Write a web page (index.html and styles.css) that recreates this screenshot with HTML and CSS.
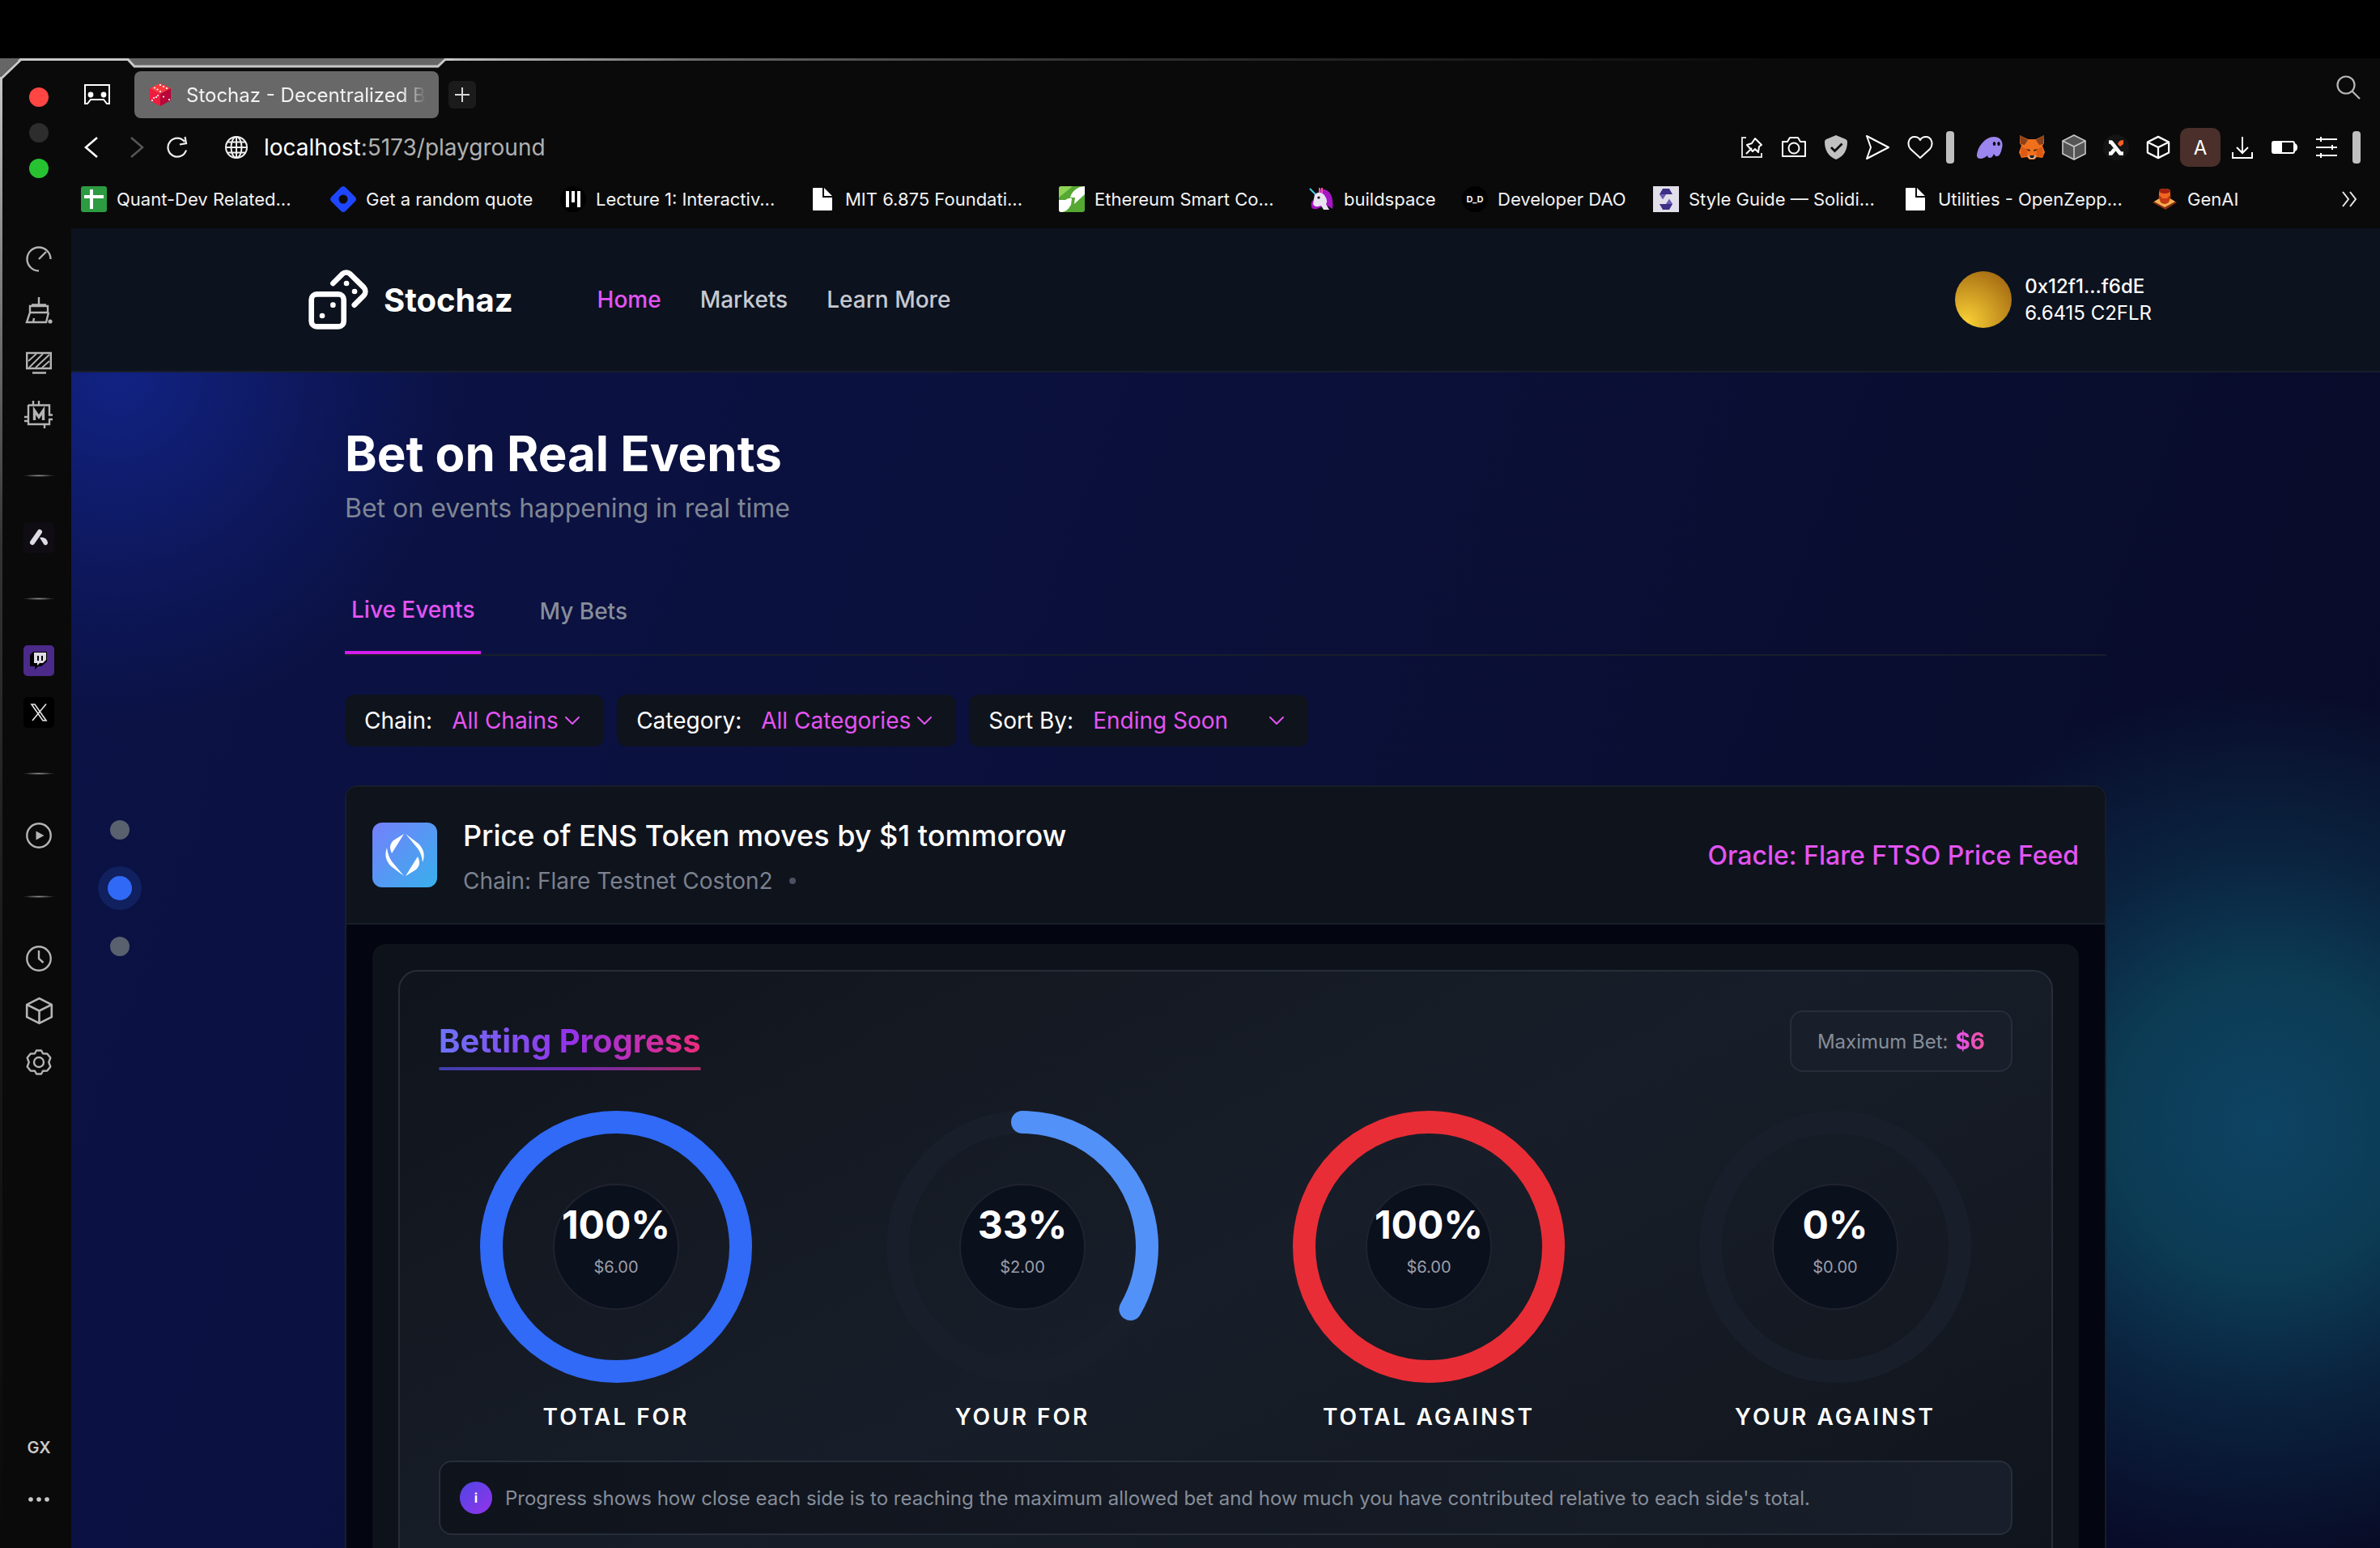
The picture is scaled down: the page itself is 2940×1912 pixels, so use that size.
FILE: index.html
```html
<!DOCTYPE html>
<html lang="en">
<head>
<meta charset="utf-8">
<title>Stochaz - Decentralized Betting</title>
<link rel="stylesheet" href="styles.css">
</head>
<body>
<svg class="defs" width="0" height="0" aria-hidden="true">
  <symbol id="file" viewBox="0 0 32 32"><path fill="#fff" d="M5 2h11v12h12v15a1 1 0 0 1-1 1H5a1 1 0 0 1-1-1V3a1 1 0 0 1 1-1zM18 2l10 10H18z"/></symbol>
  <symbol id="chevron" viewBox="0 0 20 20"><path fill="none" stroke="#e354f3" stroke-width="2" stroke-linecap="round" stroke-linejoin="round" d="M1 6l8 8 8-8"/></symbol>
  <symbol id="cube" viewBox="0 0 32 32"><path fill="none" stroke="currentColor" stroke-width="2.4" stroke-linejoin="round" d="M16 2l14 7v14l-14 7-14-7V9zM2 9l14 7 14-7M16 16v14"/></symbol>
</svg>

<div class="browser">
  <svg class="frame" width="560" height="32" viewBox="0 0 560 32" aria-hidden="true">
    <path fill="#666" d="M0 0h25L0 24zM158 0l9 10h374l9-10z"/>
    <path fill="none" stroke="#c8c8c8" stroke-width="3" d="M1.500 32V25L26 1.500h132l8 8.500h375l9-8.500h10"/>
  </svg>

  <aside class="dock">
    <div class="lights"><i class="light light--red"></i><i class="light light--idle"></i><i class="light light--green"></i></div>
    <nav class="dock__items" aria-label="Sidebar">
      <button class="dock__btn" aria-label="Speed"><svg width="32" height="32" viewBox="0 0 32 32"><path class="line" d="M16 30.500A14.500 14.500 0 1 1 30.500 16M16 16l9-9"/></svg></button>
      <button class="dock__btn" aria-label="Cleaner"><svg width="34" height="34" viewBox="0 0 34 34"><path class="line" d="M17 0v10M6 11h22v8H6zM6 19L2 31h24l3-12M11 26l-1 5M8 9.500h18"/><circle cx="31" cy="30" r="2.600" fill="#b4b4b4"/></svg></button>
      <button class="dock__btn" aria-label="Display"><svg width="32" height="28" viewBox="0 0 32 28"><path class="line" d="M1.200 2h29.600v19H1.200zM8 26.500h17"/><path stroke="#b4b4b4" stroke-width="1.800" d="M3 12L13 3M4 20L21 3M12 20L29 4M20 20l9-8"/></svg></button>
      <button class="dock__btn" aria-label="Mods"><svg width="36" height="36" viewBox="0 -1 36 36"><path class="line" d="M11 0v5M18 0v5M5 5.500h26v12h4M31 23v6H5V5M35 23h-5M0 20h5M0 25h5M25 29v5"/><path class="line line--bold" d="M12.500 24V12l5.500 8 5.500-8v12"/></svg></button>
      <i class="dock__sep"></i>
      <button class="dock__btn" aria-label="Aria"><svg width="38" height="38" viewBox="0 0 38 38"><rect width="38" height="38" rx="5" fill="#0f0d13"/><path stroke="#dddbe3" stroke-width="6" stroke-linecap="round" d="M20 12l-9 13"/><path fill="#dddbe3" d="M20 19c5-1 9 1 10 6 0 4-4 4-5 2z"/></svg></button>
      <i class="dock__sep"></i>
      <button class="dock__btn" aria-label="Twitch"><svg width="38" height="38" viewBox="0 0 38 38"><rect width="38" height="38" rx="5" fill="#4b2a8a"/><path fill="#000" d="M8 12l4-4h17v12l-7 6h-4l-4 4v-4H8z"/><path fill="#dedbe6" d="M13 9h15v9l-4 4h-4l-3 3v-3h-4z"/><path fill="#000" d="M17 13h2v6h-2zM22 13h2v6h-2z"/></svg></button>
      <button class="dock__btn" aria-label="X"><svg width="38" height="38" viewBox="0 0 38 38"><rect width="38" height="38" rx="5" fill="#000"/><path fill="none" stroke="#e4e4e4" stroke-width="1.600" d="M10 9h4l14 20h-4zM28 8.500L11 29"/></svg></button>
      <i class="dock__sep"></i>
      <button class="dock__btn" aria-label="Player"><svg width="32" height="32" viewBox="0 0 32 32"><circle class="line" cx="16" cy="16" r="14.700"/><path fill="#b4b4b4" d="M12.500 10.500l10 5.500-10 5.500z"/></svg></button>
      <i class="dock__sep"></i>
      <button class="dock__btn" aria-label="History"><svg width="32" height="32" viewBox="0 0 32 32"><circle class="line" cx="16" cy="16" r="14.700"/><path class="line" d="M16 6v10l5.500 5"/></svg></button>
      <button class="dock__btn" aria-label="Extensions"><svg width="35" height="35"><use href="#cube"/></svg></button>
      <button class="dock__btn" aria-label="Settings"><svg width="32" height="32" viewBox="0 0 32 32"><path class="line" stroke-linejoin="round" d="M13 1.500h6l2 3.800 5.300.2 4 5-2 5.500 2 5.500-4 5-5.300.2-2 3.800h-6l-2-3.800-5.300-.2-4-5 2-5.500-2-5.500 4-5 5.300-.2z"/><circle class="line" cx="16" cy="16" r="6"/></svg></button>
    </nav>
    <div class="dock__foot">
      <button class="dock__btn dock__btn--gx">GX</button>
      <button class="dock__btn" aria-label="More"><svg width="28" height="8" viewBox="0 0 28 8" fill="#c8c8c8"><circle cx="4" cy="4" r="2.800"/><circle cx="14" cy="4" r="2.800"/><circle cx="24" cy="4" r="2.800"/></svg></button>
    </div>
  </aside>

  <div class="window">
    <div class="tabs">
      <button class="icon-btn tabs__island" aria-label="Corner"><svg width="32" height="26" viewBox="0 0 32 26"><path fill="none" stroke="#fff" stroke-width="2" d="M1 1h30v23h-3l-4-5H8l-4 5H1z"/><circle cx="8" cy="13" r="3.400" fill="#fff"/><circle cx="24" cy="13" r="3.400" fill="#fff"/></svg></button>
      <div class="tab">
        <svg width="28" height="30" viewBox="0 0 28 30"><path fill="#fb3a40" d="M14 1L27 7l-13 7L1 7z"/><path fill="#ee1d3f" d="M1 7l13 7v15L3 23a3 3 0 0 1-2-3z"/><path fill="#b8053a" d="M27 7l-13 7v15l11-6a3 3 0 0 0 2-3z"/><g fill="#fff"><circle cx="14" cy="3" r="1.100"/><circle cx="18" cy="5" r="1.100"/><circle cx="22" cy="7" r="1.100"/><circle cx="7" cy="6.500" r="1.100"/><circle cx="10.500" cy="8.500" r="1.100"/><circle cx="14" cy="11" r="1.100"/><circle cx="4" cy="22" r="1.100"/><circle cx="6" cy="19" r="1.100"/><circle cx="9" cy="18" r="1.100"/><circle cx="11" cy="16" r="1.100"/><circle cx="18" cy="17.500" r="1.100"/><circle cx="25" cy="21" r="1.100"/></g></svg>
        <span class="tab__title">Stochaz - Decentralized B</span>
      </div>
      <button class="icon-btn tabs__new" aria-label="New tab"><svg width="20" height="20" viewBox="0 0 20 20"><path stroke="#d8d8d8" stroke-width="2" d="M10 1v18M1 10h18"/></svg></button>
      <button class="icon-btn tabs__search" aria-label="Search tabs"><svg width="30" height="30" viewBox="0 0 30 30"><g fill="none" stroke="#b8b8b8" stroke-width="2.200"><circle cx="12" cy="12" r="10.500"/><path d="M19.500 19.500L29 29"/></g></svg></button>
    </div>

    <div class="nav">
      <div class="nav__history">
        <button class="icon-btn" aria-label="Back"><svg width="20" height="28" viewBox="0 0 20 28"><path fill="none" stroke="#fff" stroke-width="2.600" d="M18 2L4 14l14 12"/></svg></button>
        <button class="icon-btn nav__forward" aria-label="Forward"><svg width="20" height="28" viewBox="0 0 20 28"><path fill="none" stroke="#555" stroke-width="2.600" d="M2 2l14 12L2 26"/></svg></button>
        <button class="icon-btn nav__reload" aria-label="Reload"><svg width="26" height="28" viewBox="0 0 26 28"><path fill="none" stroke="#eee" stroke-width="2.200" d="M24 17.500A11.500 11.500 0 1 1 22 7M22.500 1l1.500 8-8 1.500"/></svg></button>
      </div>
      <div class="address">
        <svg width="28" height="28" viewBox="0 0 28 28"><g fill="none" stroke="#eee" stroke-width="2"><circle cx="14" cy="14" r="13"/><ellipse cx="14" cy="14" rx="6.500" ry="13"/><path d="M3 7.500h22M1 14h26M3 20.500h22M14 1v26"/></g></svg>
        <span class="address__text">localhost<span class="address__rest">:5173/playground</span></span>
      </div>
      <div class="tools">
        <button class="icon-btn" aria-label="Pin"><svg width="28" height="28" viewBox="0 0 28 28"><path fill="none" stroke="#d8d8d8" stroke-width="2" d="M7 2H2v24h24v-5"/><path fill="none" stroke="#fff" stroke-width="2" stroke-linejoin="round" d="M18 3l8 8-3 2-1 7-4-4-3 3-7-8 6-2zM14 15l-7 7"/></svg></button>
        <button class="icon-btn" aria-label="Snapshot"><svg width="32" height="28" viewBox="0 0 32 28"><path fill="none" stroke="#fff" stroke-width="2" stroke-linejoin="round" d="M2 7h6l3-5h10l3 5h6v18H2z"/><circle cx="16" cy="15" r="6.500" fill="none" stroke="#fff" stroke-width="2"/></svg></button>
        <button class="icon-btn" aria-label="Shield"><svg width="30" height="32" viewBox="0 0 30 32"><path fill="#c0c0c0" d="M15 1l12 5q2 1 2 3c0 10-4 18-14 22C5 27 1 19 1 9q0-2 2-3z"/><path fill="none" stroke="#0a0a0a" stroke-width="2.800" d="M9 16l4.500 4.500 9-9"/></svg></button>
        <button class="icon-btn" aria-label="Send"><svg width="30" height="30" viewBox="0 0 30 30"><path fill="none" stroke="#fff" stroke-width="2" stroke-linejoin="round" d="M1 1l27 14L1 29l5-14z"/></svg></button>
        <button class="icon-btn" aria-label="Favorite"><svg width="32" height="30" viewBox="0 0 32 30"><path fill="none" stroke="#fff" stroke-width="2" stroke-linejoin="round" d="M16 28L4 17C-1 11 2 2 9 2q5 0 7 4 2-4 7-4c7 0 10 9 5 15z"/></svg></button>
      </div>
      <i class="grip"></i>
      <div class="tools tools--ext">
        <button class="icon-btn" aria-label="Phantom"><svg width="32" height="28" viewBox="0 0 32 28"><path fill="#9a86ee" d="M0 25C0 14 10 1 21 1c9 0 12 7 10 14-1 5-3 10-6 10-3 0-3-2-4-3-1 2-2 5-5 5-2 0-3-2-3-3-3 4-12 6-13 1z"/><ellipse cx="21.500" cy="9.500" rx="1.700" ry="2.500"/><ellipse cx="27" cy="9.500" rx="1.700" ry="2.500"/></svg></button>
        <button class="icon-btn" aria-label="MetaMask"><svg width="32" height="30" viewBox="0 0 32 30"><path fill="#f0701c" d="M1 0l10 5h10l10-5v10l-2 3 3 8-3 7-7-1-3 3h-6l-3-3-7 1-3-7 3-8-2-3z"/><path fill="#8a421c" d="M1 0l10 6-4 6-5-1zM31 0L21 6l4 6 5-1z"/><path fill="#dd5a14" d="M3 14l8 4-1 8-8 1zM29 14l-8 4 1 8 8 1z"/><path fill="#cfc3b8" d="M11 25h10l-2 4h-6z"/><path fill="#20201f" d="M13 25h6l-1 3h-4zM9 17l5 1-1 2zM23 17l-5 1 1 2z"/></svg></button>
        <button class="icon-btn" aria-label="Wallet"><svg width="30" height="32" viewBox="0 0 30 32"><path fill="#555" d="M15 1l14 7v16l-14 7-14-7V8z"/><path fill="none" stroke="#c8c8c8" stroke-width="1.600" d="M15 1l14 7v16l-14 7-14-7V8zM1 8l14 7 14-7M15 15v16"/></svg></button>
        <button class="icon-btn" aria-label="Explorer"><svg width="32" height="32" viewBox="0 0 32 32"><circle cx="16" cy="16" r="16" fill="#141414"/><path fill="none" stroke="#fff" stroke-width="4.600" stroke-linejoin="round" d="M7 9.500h3l11 14h4M7 23.500h3l4-5"/><path fill="#f2602a" d="M18 12q1-5 7-5v5l-4 3z"/></svg></button>
        <button class="icon-btn" aria-label="Extensions"><svg class="white" width="30" height="30"><use href="#cube"/></svg></button>
        <button class="icon-btn profile">A</button>
        <button class="icon-btn" aria-label="Downloads"><svg width="28" height="28" viewBox="0 0 28 28"><path fill="none" stroke="#fff" stroke-width="2" d="M14 1v20M7 14l7 7 7-7M2 20v7h24v-7"/></svg></button>
        <button class="icon-btn" aria-label="Battery"><svg width="32" height="18" viewBox="0 0 32 18"><rect x="1" y="2" width="27" height="14" rx="2" fill="none" stroke="#fff" stroke-width="2"/><path fill="#fff" d="M2 2h11v14H2zM29 4q3 1 3 5t-3 5z"/></svg></button>
        <button class="icon-btn" aria-label="Easy setup"><svg width="26" height="26" viewBox="0 0 26 26"><path stroke="#fff" stroke-width="2" d="M0 3h26M0 13h26M0 23h26M6 0v6M20 10v6M6 20v6"/></svg></button>
      </div>
      <i class="grip"></i>
    </div>

    <div class="bookmarks">
      <a class="bookmark" href="#"><svg width="32" height="32" viewBox="0 0 32 32"><rect width="32" height="32" rx="3" fill="#2c9b41"/><path fill="#fff" d="M11 4h4v7h13v4H15v13h-4V15H4v-4h7z"/></svg><span>Quant-Dev Related...</span></a>
      <a class="bookmark" href="#"><svg width="32" height="32" viewBox="0 0 32 32"><path fill="#1f46ff" fill-rule="evenodd" d="M13 1.500q3-3 6 0L30.500 13q3 3 0 6L19 30.500q-3 3-6 0L1.500 19q-3-3 0-6zM16 10.500a5.500 5.500 0 1 0 0 11 5.500 5.500 0 0 0 0-11z"/></svg><span>Get a random quote</span></a>
      <a class="bookmark" href="#"><svg width="32" height="32" viewBox="0 0 32 32"><circle cx="16" cy="16" r="16"/><path fill="#fff" d="M7 6h4v20H7zM14 6h4v14h-4zM21 6h4v20h-4z"/></svg><span>Lecture 1: Interactiv...</span></a>
      <a class="bookmark" href="#"><svg width="32" height="32"><use href="#file"/></svg><span>MIT 6.875 Foundati...</span></a>
      <a class="bookmark" href="#"><svg width="32" height="32" viewBox="0 0 32 32"><rect width="32" height="32" rx="3" fill="#55a832"/><path fill="#8ed455" d="M0 3q0-3 3-3h14L0 14z"/><path fill="#fff" d="M32 0v10L19 22l1-8h-6q2-9 12-13zM0 17h8q4-3 8-2l-1 8Q10 32 3 32q-3 0-3-3z"/></svg><span>Ethereum Smart Co...</span></a>
      <a class="bookmark" href="#"><svg width="32" height="32" viewBox="0 0 32 32"><path fill="#a516c4" d="M15 4c12-2 17 10 15 24l-8-5-11 5q-9 2-7-8z"/><path fill="#e9e4f2" d="M8 10q7-5 12 1 5 7 2 11l4 7h-7l-3-5q-8 3-10-2z"/><path stroke="#f05a9c" stroke-width="2" d="M14 2v6M17 2v6"/><path stroke="#46d3e8" stroke-width="2" d="M2 3l7 7"/><circle cx="13" cy="14" r="1.600"/></svg><span>buildspace</span></a>
      <a class="bookmark" href="#"><span class="dao">D_D</span><span>Developer DAO</span></a>
      <a class="bookmark" href="#"><svg width="32" height="32" viewBox="0 0 32 32"><path fill="#e3dfea" d="M0 0h32v32H0z"/><path fill="#3c2f87" d="M12 3h8l4 7h-8l-4 6-4-6zM20 29h-8l-4-7h8l4-6 4 6z"/><path fill="#6d5fb4" d="M8 10h8l-4 6zM24 22h-8l4-6z"/></svg><span>Style Guide — Solidi...</span></a>
      <a class="bookmark" href="#"><svg width="32" height="32"><use href="#file"/></svg><span>Utilities - OpenZepp...</span></a>
      <a class="bookmark" href="#"><svg width="32" height="32" viewBox="0 0 32 32"><path fill="#8a2c14" d="M1 20l15-9 15 9-14 9z"/><path fill="#f4b052" d="M3 19l13-8 13 8-13 7z"/><path fill="#c43812" d="M8 12q8 6 16 0l-3 8q-5 4-10 0z"/><path fill="#f2641f" d="M9 6q0-3 7-3t7 3v6q-7 6-14 0z"/><ellipse cx="16" cy="6" rx="7" ry="3" fill="#a3220e"/></svg><span>GenAI</span></a>
      <button class="icon-btn bookmarks__more" aria-label="More bookmarks"><svg width="20" height="20" viewBox="0 0 20 20"><path fill="none" stroke="#e8e8e8" stroke-width="2" d="M2 1l7 9-7 9M11 1l7 9-7 9"/></svg></button>
    </div>

    <div class="page">
      <header class="site-header">
        <a class="brand" href="#"><svg width="80" height="80" viewBox="0 0 24 24" fill="none" stroke="#fff" stroke-width="2" stroke-linecap="round" stroke-linejoin="round"><rect width="12" height="12" x="2" y="10" rx="2"/><path d="m17.920 14 3.500-3.500a2.240 2.240 0 0 0 0-3l-5-4.920a2.240 2.240 0 0 0-3 0L10 6M6 18h.01M10 14h.01M15 6h.01M18 9h.01"/></svg>Stochaz</a>
        <nav class="menu"><a class="menu__link menu__link--on" href="#">Home</a><a class="menu__link" href="#">Markets</a><a class="menu__link" href="#">Learn More</a></nav>
        <div class="wallet"><i class="wallet__avatar"></i><div><div class="wallet__address">0x12f1...f6dE</div><div class="wallet__balance">6.6415 C2FLR</div></div></div>
      </header>

      <main class="stage">
        <nav class="dots" aria-label="Sections"><a class="dot" href="#" aria-label="Top"></a><a class="dot dot--on" href="#" aria-label="Events"></a><a class="dot" href="#" aria-label="More"></a></nav>
        <div class="content">
          <h1 class="title">Bet on Real Events</h1>
          <p class="subtitle">Bet on events happening in real time</p>
          <div class="views"><button class="view view--on">Live Events</button><button class="view">My Bets</button></div>
          <div class="filters">
            <label class="filter">Chain:<span class="filter__pick"><select class="filter__select"><option>All Chains</option></select><svg width="20" height="20"><use href="#chevron"/></svg></span></label>
            <label class="filter">Category:<span class="filter__pick"><select class="filter__select"><option>All Categories</option></select><svg width="20" height="20"><use href="#chevron"/></svg></span></label>
            <label class="filter">Sort By:<span class="filter__pick"><select class="filter__select filter__select--sort"><option>Ending Soon</option></select><svg width="20" height="20"><use href="#chevron"/></svg></span></label>
          </div>

          <article class="event">
            <header class="event__head">
              <svg width="80" height="80" viewBox="0 0 80 80"><defs><linearGradient id="ens" x1="0" y1="0" x2="1" y2="1"><stop offset="0" stop-color="#7480fb"/><stop offset="1" stop-color="#38b0ec"/></linearGradient></defs><rect width="80" height="80" rx="12" fill="url(#ens)"/><path fill="#fff" d="M39 14L24 38q-5-9 2-16zM18 31q1 10 6 17l15 18-16-12q-10-10-5-23zM41 14l16 12q10 10 5 23-1-10-6-17zM41 66l15-24q5 9-2 16z"/></svg>
              <div class="event__text">
                <h2 class="event__title">Price of ENS Token moves by $1 tommorow</h2>
                <p class="event__chain">Chain: Flare Testnet Coston2<i class="event__bullet"></i></p>
              </div>
              <p class="event__oracle">Oracle: Flare FTSO Price Feed</p>
            </header>
            <div class="panel">
              <section class="progress">
                <div class="progress__head">
                  <h3 class="progress__title">Betting Progress</h3>
                  <div class="limit">Maximum Bet: <b class="limit__value">$6</b></div>
                </div>
                <div class="rings">
                  <div class="ring"><div class="ring__dial"><svg width="336" height="336" viewBox="0 0 336 336"><circle class="ring__arc ring__arc--for" cx="168" cy="168" r="154"/></svg><div class="ring__core"><b class="ring__pct">100%</b><span class="ring__sum">$6.00</span></div></div><div class="ring__label">Total For</div></div>
                  <div class="ring"><div class="ring__dial"><svg width="336" height="336" viewBox="0 0 336 336"><circle class="ring__arc" cx="168" cy="168" r="154"/><circle class="ring__arc ring__arc--mine" cx="168" cy="168" r="154" pathLength="300" stroke-dasharray="100 300" transform="rotate(-90 168 168)"/></svg><div class="ring__core"><b class="ring__pct">33%</b><span class="ring__sum">$2.00</span></div></div><div class="ring__label">Your For</div></div>
                  <div class="ring"><div class="ring__dial"><svg width="336" height="336" viewBox="0 0 336 336"><circle class="ring__arc ring__arc--against" cx="168" cy="168" r="154"/></svg><div class="ring__core"><b class="ring__pct">100%</b><span class="ring__sum">$6.00</span></div></div><div class="ring__label">Total Against</div></div>
                  <div class="ring"><div class="ring__dial"><svg width="336" height="336" viewBox="0 0 336 336"><circle class="ring__arc" cx="168" cy="168" r="154"/></svg><div class="ring__core"><b class="ring__pct">0%</b><span class="ring__sum">$0.00</span></div></div><div class="ring__label">Your Against</div></div>
                </div>
                <div class="note"><i class="note__icon">i</i>Progress shows how close each side is to reaching the maximum allowed bet and how much you have contributed relative to each side's total.</div>
              </section>
            </div>
          </article>
        </div>
      </main>
    </div>
  </div>
</div>
</body>
</html>
```
FILE: styles.css
```css
* { box-sizing: border-box; }
body { margin: 0; background: #000; color: #fff; font-family: Inter, "Liberation Sans", sans-serif; height: 100vh; overflow: hidden; padding-top: 72px; }
h1, h2, h3, p { margin: 0; }
a { color: inherit; text-decoration: none; }
button { border: 0; padding: 0; background: none; color: inherit; font: inherit; }
svg { display: block; flex: none; }
i { font-style: normal; }
.defs { position: absolute; }

.browser { position: relative; display: flex; height: 100%; background: #0a0a0a; border-top: 3px solid; border-image: linear-gradient(to right, #c8c8c8 18%, #666 30%, #333 45%, #0a0a0a 75%) 3; }
.browser::after { content: ""; position: absolute; left: 0; top: 20px; bottom: 0; width: 3px; background: linear-gradient(#c8c8c8, #888 12%, #333 32%, #1a1a1a 60%, #0a0a0a); }
.frame { position: absolute; left: 0; top: -3px; }

/* side dock */
.dock { flex: none; width: 88px; padding: 33px 0 28px 8px; display: flex; flex-direction: column; align-items: center; color: #b4b4b4; }
.lights { display: grid; gap: 20px; }
.light { width: 24px; height: 24px; border-radius: 50%; }
.light--red { background: #ff4643; }
.light--idle { background: #2d2d2d; }
.light--green { background: #27c232; }
.dock__items { margin-top: 68px; display: flex; flex-direction: column; align-items: center; }
.dock__btn { width: 64px; height: 64px; display: grid; place-items: center; }
.dock__btn--gx { font-size: 20px; font-weight: 600; color: #c8c8c8; }
.dock__sep { width: 40px; height: 3px; margin: 42px 0 43px; background: radial-gradient(closest-side, #909090, transparent); }
.dock__foot { margin-top: auto; }
.line { fill: none; stroke: #b4b4b4; stroke-width: 2.4; }
.line--bold { stroke-width: 3.4; }

/* browser chrome */
.window { flex: 1; min-width: 0; display: flex; flex-direction: column; }
.icon-btn { display: grid; place-items: center; }
.tabs { display: flex; align-items: center; height: 71px; padding: 13px 24px 0 16px; }
.tabs__island { margin-right: 30px; }
.tab { width: 376px; height: 58px; padding: 0 18px; border-radius: 8px; background: #686868; display: flex; align-items: center; gap: 18px; color: #f2f2f2; }
.tab__title { white-space: nowrap; font-size: 24px; -webkit-mask-image: linear-gradient(to right, #000 90%, transparent); mask-image: linear-gradient(to right, #000 90%, transparent); }
.tabs__new { width: 34px; height: 34px; margin-left: 12px; border-radius: 6px; background: #1b1b1b; }
.tabs__search { margin: 0 0 18px auto; }
.nav { display: flex; align-items: center; height: 72px; padding: 0 24px 0 14px; }
.nav__history { display: flex; }
.nav__forward { margin-left: 38px; }
.nav__reload { margin-left: 26px; }
.address { display: flex; align-items: center; gap: 20px; margin-left: 46px; font-size: 28px; }
.address__rest { color: #b0b0b0; }
.tools { margin-left: auto; display: grid; grid-auto-flow: column; grid-auto-columns: 52px; align-items: center; }
.tools--ext { margin-left: 18px; margin-right: 6px; }
.grip { width: 10px; height: 40px; border-radius: 4px; background: #c0c0c0; margin-left: 6px; }
.grip:last-child { margin-left: 0; }
.profile { width: 50px; height: 48px; justify-self: center; border-radius: 10px; background: #4a2f2b; font-size: 24px; }
.white { color: #fff; }
.bookmarks { height: 64px; padding: 0 28px 8px 12px; display: grid; grid-template-columns: 308px 284px 308px 308px 308px 190px 236px 308px 308px 1fr auto; align-items: center; font-size: 22px; color: #f2f2f2; white-space: nowrap; }
.bookmark { display: flex; align-items: center; gap: 12px; }
.dao { width: 32px; height: 32px; border-radius: 50%; background: #000; display: grid; place-items: center; font-size: 11px; font-weight: 700; }

/* site */
.page { flex: 1; min-height: 0; display: flex; flex-direction: column; overflow: hidden; }
.site-header { flex: none; display: flex; align-items: center; height: 178px; padding: 0 282px 0 290px; background: #0c121e; border-bottom: 2px solid #171e2b; }
.brand { display: flex; align-items: center; gap: 16px; font-size: 40px; font-weight: 700; }
.menu { display: flex; gap: 48px; margin-left: 104px; }
.menu__link { font-size: 28px; font-weight: 500; color: #c5c9d1; }
.menu__link--on { color: #e354f3; }
.wallet { margin-left: auto; display: flex; align-items: center; gap: 16px; font-size: 24px; line-height: 33px; }
.wallet__address { font-weight: 500; }
.wallet__avatar { width: 70px; height: 70px; border-radius: 50%; background: radial-gradient(circle at 20% 90%, #f8d035, #9c5f0e 95%); }

.stage { flex: 1; min-height: 0; position: relative; background:
  radial-gradient(circle 430px at 2% 0, rgba(18, 36, 138, .9), rgba(18, 36, 138, .35) 55%, transparent),
  radial-gradient(circle 540px at 95% 930px, #0d4363, #0c3b54 35%, rgba(11, 45, 72, .7) 62%, transparent),
  linear-gradient(110deg, #0b1246, #0b103a 45%, #090d2e 75%, #080b26); }
.dots { position: absolute; left: 33px; top: 553px; display: grid; gap: 48px; justify-items: center; }
.dot { width: 24px; height: 24px; margin: 0 15px; border-radius: 50%; background: #59606e; }
.dot--on { width: 30px; height: 30px; margin: -3px 0; background: #3069f6; box-shadow: 0 0 0 12px #11205f; }
.content { max-width: 2176px; margin: 0 auto; padding-top: 64px; }
.title { font-size: 60px; line-height: 72px; font-weight: 700; }
.subtitle { margin-top: 8px; font-size: 32px; line-height: 48px; color: #7f8694; }
.views { display: flex; gap: 64px; margin-top: 48px; border-bottom: 2px solid #171e29; }
.view { padding: 32px 8px 30px; font-size: 28px; line-height: 42px; font-weight: 500; color: #868d99; }
.view--on { color: #e354f3; border-bottom: 4px solid #d31cee; }
.filters { display: flex; gap: 16px; margin-top: 48px; }
.filter { height: 64px; padding: 0 28px 0 24px; display: flex; align-items: center; gap: 24px; border-radius: 12px; background: #0f131c; font-size: 28px; }
.filter__pick { display: flex; align-items: center; gap: 8px; }
.filter__select { appearance: none; border: 0; padding: 0; background: none; color: #e354f3; font: inherit; }
.filter__select--sort { width: 210px; }

.event { margin-top: 48px; border: 2px solid #171e29; border-radius: 16px; background: #030510; overflow: hidden; }
.event__head { display: flex; align-items: center; padding: 32px; background: #0f131c; border-bottom: 2px solid #171e29; }
.event__text { margin-left: 32px; }
.event__title { font-size: 36px; line-height: 56px; font-weight: 500; }
.event__chain { display: flex; align-items: center; margin-top: 8px; font-size: 28px; line-height: 40px; color: #7a818e; }
.event__bullet { width: 8px; height: 8px; margin-left: 20px; border-radius: 50%; background: #4a5261; }
.event__oracle { margin-left: auto; font-size: 32px; font-weight: 500; color: #e354f3; }
.panel { margin: 24px 32px; padding: 32px; border-radius: 16px; background: #0e121b; }
.progress { padding: 48px; border: 2px solid #272d39; border-radius: 24px; background: linear-gradient(153deg, #10141c, #181e29 50%, #10141c); }
.progress__head { display: flex; align-items: center; justify-content: space-between; }
.progress__title { position: relative; font-size: 40px; line-height: 56px; font-weight: 700; color: transparent; background: linear-gradient(to right, #6d74f8, #9333ea 50%, #ee2b7b); -webkit-background-clip: text; background-clip: text; }
.progress__title::after { content: ""; position: absolute; left: 0; right: 0; bottom: -8px; height: 4px; border-radius: 2px; background: linear-gradient(to right, #3f40ad, #6d2bb0 50%, #a32a60); }
.limit { display: flex; align-items: center; gap: 9px; height: 76px; padding: 0 32px; border: 2px solid #272d39; border-radius: 16px; background: #191f2a; font-size: 24px; color: #868d99; }
.limit__value { font-size: 28px; color: transparent; background: linear-gradient(to right, #e354f3, #ee529c); -webkit-background-clip: text; background-clip: text; }
.rings { display: grid; grid-template-columns: repeat(4, 1fr); gap: 64px; margin-top: 48px; }
.ring { display: flex; flex-direction: column; align-items: center; gap: 22px; }
.ring__dial { display: grid; place-items: center; }
.ring__dial > * { grid-area: 1 / 1; }
.ring__arc { fill: none; stroke: #191f2a; stroke-width: 28; stroke-linecap: round; }
.ring__arc--for { stroke: #306af6; }
.ring__arc--mine { stroke: #5291f8; }
.ring__arc--against { stroke: #e92d36; }
.ring__core { width: 156px; height: 156px; padding-bottom: 14px; display: flex; flex-direction: column; align-items: center; justify-content: center; border: 2px solid #20232f; border-radius: 50%; background: #0b101d; }
.ring__pct { font-size: 48px; line-height: 56px; }
.ring__sum { margin-top: 8px; font-size: 20px; line-height: 32px; color: #9a9ea9; }
.ring__label { font-size: 28px; line-height: 40px; font-weight: 600; letter-spacing: 3px; text-transform: uppercase; }
.note { display: flex; align-items: center; gap: 16px; height: 92px; margin-top: 34px; padding: 0 24px; border: 2px solid #272d39; border-radius: 16px; background: linear-gradient(to right, #0f131c, #191f2a); font-size: 24px; color: #868d99; }
.note__icon { width: 40px; height: 40px; border-radius: 50%; display: grid; place-items: center; background: linear-gradient(135deg, #4f46e5, #9333ea); color: #fff; font-size: 16px; font-weight: 700; }
```
